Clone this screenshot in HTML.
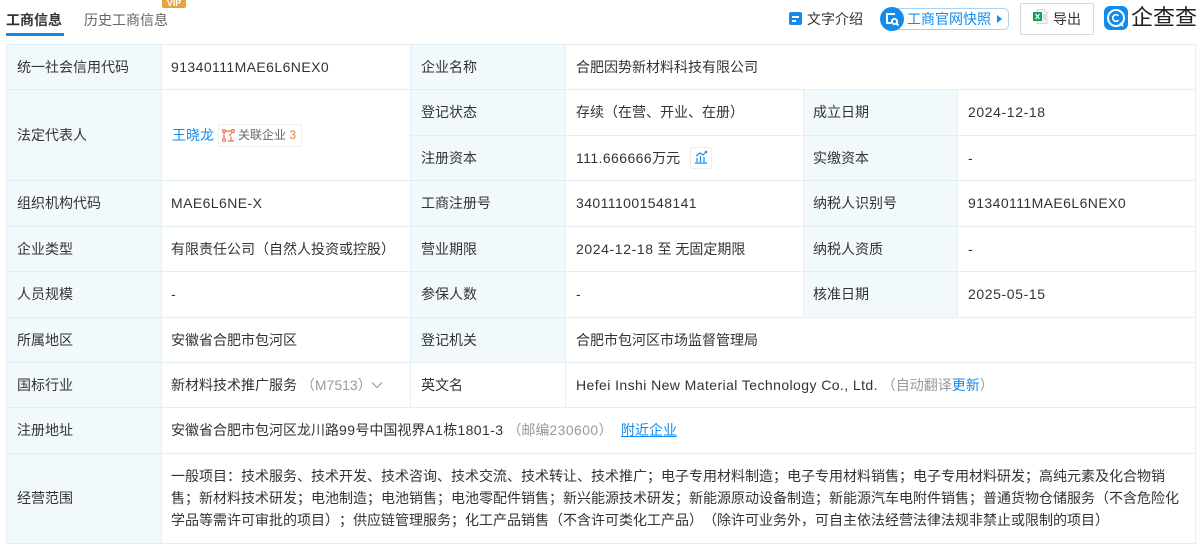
<!DOCTYPE html>
<html lang="zh"><head><meta charset="utf-8">
<style>
html,body{margin:0;padding:0;background:#fff}
body{width:1204px;height:551px;position:relative;overflow:hidden;font-family:"Liberation Sans","Noto Sans CJK SC",sans-serif;font-size:14px;color:#333;text-spacing-trim:space-all}
.t{position:absolute;white-space:nowrap;line-height:22px;height:22px}
.n{letter-spacing:.42px}
.bg{position:absolute;background:#f2f9fc}
.h{position:absolute;background:#e4eef6;height:1px}
.v{position:absolute;background:#e4eef6;width:1px}
a,.b{color:#128bed}
.g{color:#999}
svg{position:absolute;display:block}
</style></head><body>
<div class="t" style="left:6px;top:9px;font-size:14px;font-weight:bold;color:#333">工商信息</div>
<div class="t" style="left:84px;top:9px;color:#666">历史工商信息</div>
<div style="position:absolute;left:6px;top:33px;width:58px;height:3px;background:#128bed"></div>
<div style="position:absolute;left:162px;top:0;width:24px;height:8px;background:#e8a33d;border-radius:0 0 2px 2px;color:#fff;font-size:9px;font-weight:bold;line-height:6px;text-align:center;overflow:hidden">VIP</div>

<div style="position:absolute;left:789px;top:12px;width:13px;height:13px;background:#128bed;border-radius:2px"></div>
<div style="position:absolute;left:792px;top:16px;width:7px;height:1.5px;background:#fff"></div>
<div style="position:absolute;left:792px;top:20px;width:4px;height:1.5px;background:#fff"></div>
<div class="t" style="left:807px;top:8px;font-size:14px;color:#333">文字介绍</div>

<div style="position:absolute;left:886px;top:8px;width:121px;height:20px;border:1px solid #a9d3f5;border-radius:5px"></div>
<div style="position:absolute;left:880px;top:7px;width:24px;height:24px;background:#128bed;border-radius:50%"></div>
<svg style="left:880px;top:7px" width="24" height="24" viewBox="0 0 24 24" fill="none" stroke="#fff" stroke-width="2"><path d="M15 7H7v9h4"/><circle cx="14.5" cy="14.5" r="2.6"/><path d="M16.5 16.5l2 2"/></svg>
<div class="t" style="left:907px;top:8px;font-size:14px;color:#128bed">工商官网快照</div>
<div style="position:absolute;left:997px;top:15px;width:0;height:0;border-left:5px solid #128bed;border-top:4px solid transparent;border-bottom:4px solid transparent"></div>

<div style="position:absolute;left:1020px;top:3px;width:72px;height:30px;border:1px solid #d8d8d8;border-radius:2px"></div>
<svg style="left:1033px;top:9px" width="16" height="16" viewBox="0 0 16 16"><path d="M4 .5h7l3 3v11H4z" fill="#f4f4f4" stroke="#ccc" stroke-width=".8"/><rect x="0" y="3" width="9" height="9" fill="#12a35a"/><path d="M2.500 5l4 5M6.500 5l-4 5" stroke="#fff" stroke-width="1.200"/><path d="M10 6h3M10 8h3M10 10h3" stroke="#bbb" stroke-width=".8"/></svg>
<div class="t" style="left:1053px;top:8px;font-size:14px;color:#333">导出</div>

<div style="position:absolute;left:1104px;top:6px;width:24px;height:24px;background:#128bed;border-radius:6px"></div>
<svg style="left:1104px;top:6px" width="24" height="24" viewBox="0 0 24 24" fill="none" stroke="#fff"><circle cx="12" cy="12" r="8" stroke-width="2"/><path d="M14.500 9.800a3.300 3.300 0 1 0 0 4.400" stroke-width="1.600"/><path d="M16 17l3 3" stroke-width="2"/></svg>
<div class="t" style="left:1131px;top:4px;font-size:22px;line-height:28px;height:28px;color:#222">企查查</div>

<div class="bg" style="left:7px;top:45px;width:154px;height:498px"></div>
<div class="bg" style="left:411px;top:45px;width:154px;height:317px"></div>
<div class="bg" style="left:804px;top:90px;width:153px;height:227px"></div>
<div class="h" style="left:6px;top:44px;width:1190px"></div>
<div class="h" style="left:6px;top:89px;width:1190px"></div>
<div class="h" style="left:411px;top:135px;width:785px"></div>
<div class="h" style="left:6px;top:180px;width:1190px"></div>
<div class="h" style="left:6px;top:226px;width:1190px"></div>
<div class="h" style="left:6px;top:271px;width:1190px"></div>
<div class="h" style="left:6px;top:317px;width:1190px"></div>
<div class="h" style="left:6px;top:362px;width:1190px"></div>
<div class="h" style="left:6px;top:407px;width:1190px"></div>
<div class="h" style="left:6px;top:453px;width:1190px"></div>
<div class="h" style="left:6px;top:543px;width:1190px"></div>
<div class="v" style="left:6px;top:44px;height:500px"></div>
<div class="v" style="left:161px;top:44px;height:500px"></div>
<div class="v" style="left:410px;top:44px;height:363px"></div>
<div class="v" style="left:565px;top:44px;height:363px"></div>
<div class="v" style="left:803px;top:89px;height:228px"></div>
<div class="v" style="left:957px;top:89px;height:228px"></div>
<div class="v" style="left:1195px;top:44px;height:500px"></div>

<div class="t" style="left:17px;top:56px">统一社会信用代码</div>
<div class="t n" style="left:171px;top:56px">91340111MAE6L6NEX0</div>
<div class="t" style="left:421px;top:56px">企业名称</div>
<div class="t" style="left:576px;top:56px">合肥因势新材料科技有限公司</div>

<div class="t" style="left:17px;top:124px">法定代表人</div>
<div class="t b" style="left:172px;top:124px">王晓龙</div>
<div style="position:absolute;left:218px;top:124px;width:82px;height:21px;border:1px solid #eee;border-radius:2px"></div>
<svg style="left:222px;top:129px" width="13" height="13" viewBox="0 0 13 13" fill="none" stroke="#e8764a" stroke-width="1.200"><circle cx="2" cy="2" r="1.500"/><circle cx="11" cy="2" r="1.500"/><circle cx="2" cy="11" r="1.500"/><path d="M3.500 2h6M2 3.500v6M10 4L7 7"/><path d="M6 12h6M9 7.500v4.500"/></svg>
<div class="t" style="left:238px;top:124px;font-size:12px;color:#666">关联企业 <span style="color:#e8764a">3</span></div>

<div class="t" style="left:421px;top:101px">登记状态</div>
<div class="t" style="left:576px;top:101px">存续（在营、开业、在册）</div>
<div class="t" style="left:813px;top:101px">成立日期</div>
<div class="t n" style="left:968px;top:101px;letter-spacing:.6px">2024-12-18</div>

<div class="t" style="left:421px;top:147px">注册资本</div>
<div class="t" style="left:576px;top:147px"><span class="n">111.666666</span>万元</div>
<div style="position:absolute;left:690px;top:147px;width:20px;height:20px;border:1px solid #eee;border-radius:2px"></div>
<svg style="left:694px;top:150px" width="14" height="14" viewBox="0 0 14 14" fill="none" stroke="#128bed" stroke-width="1.200"><path d="M1 13h12M3 12V8M6.500 12V6M10 12V7M2 6l4-3 3 2 2-2"/><circle cx="12" cy="2" r="1.300" fill="#128bed" stroke="none"/></svg>
<div class="t" style="left:813px;top:147px">实缴资本</div>
<div class="t" style="left:968px;top:147px">-</div>

<div class="t" style="left:17px;top:192px">组织机构代码</div>
<div class="t n" style="left:171px;top:192px">MAE6L6NE-X</div>
<div class="t" style="left:421px;top:192px">工商注册号</div>
<div class="t n" style="left:576px;top:192px">340111001548141</div>
<div class="t" style="left:813px;top:192px">纳税人识别号</div>
<div class="t n" style="left:968px;top:192px">91340111MAE6L6NEX0</div>

<div class="t" style="left:17px;top:238px">企业类型</div>
<div class="t" style="left:171px;top:238px">有限责任公司（自然人投资或控股）</div>
<div class="t" style="left:421px;top:238px">营业期限</div>
<div class="t" style="left:576px;top:238px"><span class="n" style="letter-spacing:.6px">2024-12-18</span> 至 无固定期限</div>
<div class="t" style="left:813px;top:238px">纳税人资质</div>
<div class="t" style="left:968px;top:238px">-</div>

<div class="t" style="left:17px;top:283px">人员规模</div>
<div class="t" style="left:171px;top:283px">-</div>
<div class="t" style="left:421px;top:283px">参保人数</div>
<div class="t" style="left:576px;top:283px">-</div>
<div class="t" style="left:813px;top:283px">核准日期</div>
<div class="t n" style="left:968px;top:283px;letter-spacing:.6px">2025-05-15</div>

<div class="t" style="left:17px;top:329px">所属地区</div>
<div class="t" style="left:171px;top:329px">安徽省合肥市包河区</div>
<div class="t" style="left:421px;top:329px">登记机关</div>
<div class="t" style="left:576px;top:329px">合肥市包河区市场监督管理局</div>

<div class="t" style="left:17px;top:374px">国标行业</div>
<div class="t" style="left:171px;top:374px">新材料技术推广服务 <span class="g">（M7513）</span></div>
<svg style="left:371px;top:381px" width="12" height="9" viewBox="0 0 12 9" fill="none" stroke="#999" stroke-width="1.100"><path d="M1 1.500l5 5 5-5"/></svg>
<div class="t" style="left:421px;top:374px">英文名</div>
<div class="t" style="left:576px;top:374px"><span class="n">Hefei Inshi New Material Technology Co., Ltd.</span> <span class="g">（自动翻译<span class="b">更新</span>）</span></div>

<div class="t" style="left:17px;top:419px">注册地址</div>
<div class="t" style="left:171px;top:419px">安徽省合肥市包河区龙川路<span class="n">99</span>号中国视界<span class="n">A1</span>栋<span class="n">1801-3</span> <span class="g">（邮编<span class="n">230600</span>）</span></div>
<div class="t b" style="left:621px;top:419px;text-decoration:underline">附近企业</div>

<div class="t" style="left:17px;top:487px">经营范围</div>
<div class="t" style="left:171px;top:465px">一般项目：技术服务、技术开发、技术咨询、技术交流、技术转让、技术推广；电子专用材料制造；电子专用材料销售；电子专用材料研发；高纯元素及化合物销</div>
<div class="t" style="left:171px;top:487px">售；新材料技术研发；电池制造；电池销售；电池零配件销售；新兴能源技术研发；新能源原动设备制造；新能源汽车电附件销售；普通货物仓储服务（不含危险化</div>
<div class="t" style="left:171px;top:509px">学品等需许可审批的项目）；供应链管理服务；化工产品销售（不含许可类化工产品）（除许可业务外，可自主依法经营法律法规非禁止或限制的项目）</div>
</body></html>
